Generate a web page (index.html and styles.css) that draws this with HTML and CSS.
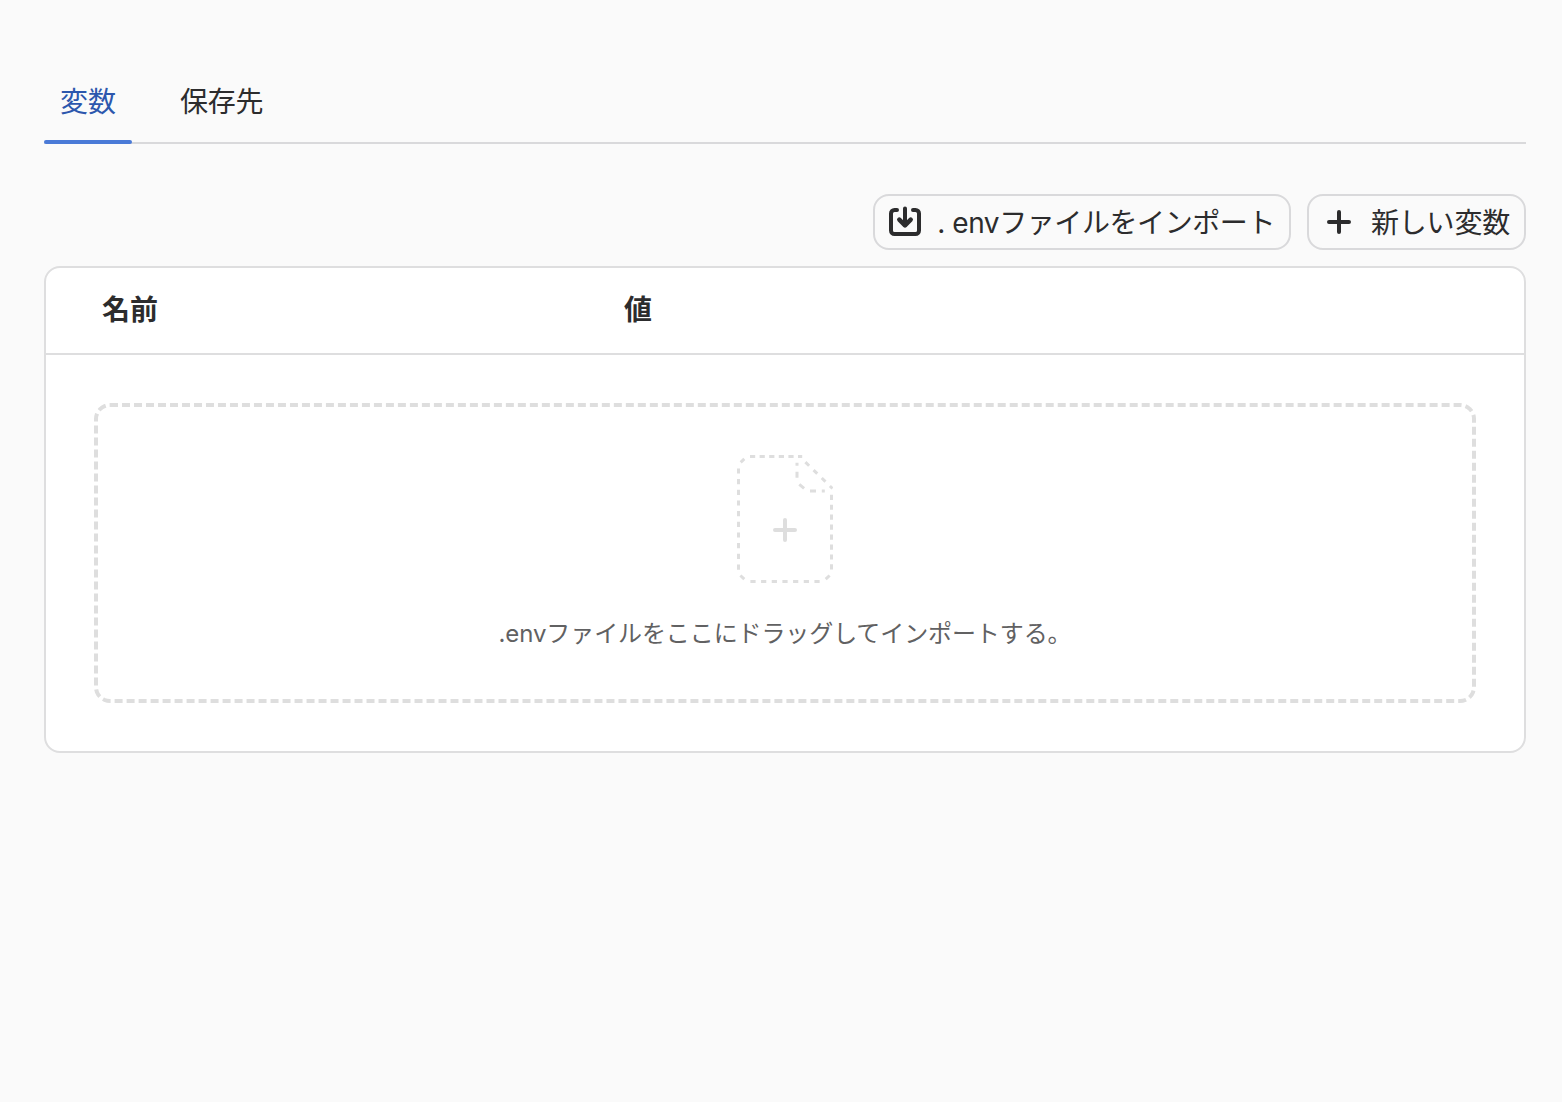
FILE: index.html
```html
<!DOCTYPE html>
<html lang="ja">
<head>
    <meta charset="UTF-8" />
    <title>変数</title>
    <link rel="stylesheet" href="styles.css">
</head>
<body>
    <div class="container">
        <nav class="tabs">
            <a class="tab active">変数</a>
            <a class="tab">保存先</a>
        </nav>

        <div class="toolbar">
            <button type="button" class="btn">
                <svg class="icon" viewBox="0 0 32 32">
                    <path d="M8 4H5.5A3.5 3.5 0 0 0 2 7.5v17A3.5 3.5 0 0 0 5.5 28h21a3.5 3.5 0 0 0 3.5-3.5v-17A3.5 3.5 0 0 0 26.5 4H24M16 2.5V19" />
                    <path class="arrow" d="M10.3 13.7L16 19.4l5.7-5.7" />
                </svg>
                <span class="import-label">. envファイルをインポート</span>
            </button>
            <button type="button" class="btn">
                <svg class="icon" viewBox="0 0 32 32">
                    <path d="M16 6v20M6 16h20" />
                </svg>
                <span>新しい変数</span>
            </button>
        </div>

        <div class="panel">
            <div class="panel-header">
                <div>名前</div>
                <div>値</div>
            </div>
            <div class="panel-body">
                <div class="dropzone">
                    <svg class="file" viewBox="0 0 96 128">
                        <!-- edges -->
                        <path class="edge" stroke-dasharray="5.2 4.4" d="M13 1.5H65.2" />
                        <path class="edge" stroke-dasharray="5.2 5.47" d="M1.5 13.4V115" />
                        <path class="edge" stroke-dasharray="5.2 5.47" d="M13.4 126.5H83" />
                        <path class="edge" stroke-dasharray="5.2 4.75" d="M94.5 39.7V115" />
                        <!-- corners -->
                        <path class="edge" d="M3.7 7.3l3.6-3.4M3.4 120.5l3.9 3.6M92.6 120.5l-3.9 3.6" />
                        <!-- fold -->
                        <path class="edge" stroke-dasharray="5.2 6.2" d="M68.4 7.1L95.5 33.5" />
                        <path class="edge" d="M60 7.8v3M60 16.7v6M62.3 29.3l4.8 4M73 36h6M84.8 36h3" />
                        <path class="plus" d="M48 65v20M38 75h20" />
                    </svg>
                    <p>.envファイルをここにドラッグしてインポートする。</p>
                </div>
            </div>
        </div>
    </div>
</body>
</html>
```

FILE: styles.css
```css
body {
    font-family: Inter, "Noto Sans CJK JP", sans-serif;
    font-size: 28px;
    line-height: 40px;
    color: #2c2c2d;
    background-color: #fafafa;
    margin: 0;
    padding: 64px 36px 0 44px;
}

.tabs {
    display: flex;
    gap: 32px;
    height: 78px;
    border-bottom: 2px solid #d9d9db;
}

.tab {
    box-sizing: border-box;
    height: 80px;
    padding: 18px 16px 0;
    letter-spacing: -0.3px;
}

.tab.active {
    position: relative;
    color: #2c57ad;
    letter-spacing: 0;
}

.tab.active::after {
    content: "";
    position: absolute;
    left: 0;
    right: 0;
    bottom: 0;
    height: 4px;
    border-radius: 2px;
    background-color: #4a7ad7;
}

.toolbar {
    display: flex;
    justify-content: flex-end;
    gap: 16px;
    margin: 50px 0 16px;
}

.btn {
    display: flex;
    align-items: center;
    gap: 16px;
    box-sizing: border-box;
    height: 56px;
    padding: 0 14px;
    border: 2px solid #d9d9db;
    border-radius: 16px;
    background-color: #fafafa;
    color: #2c2c2d;
    font: inherit;
    letter-spacing: -0.2px;
    white-space: nowrap;
}

.btn span {
    padding-top: 2px;
}

.btn .import-label {
    letter-spacing: -0.42px;
}

.icon {
    width: 32px;
    height: 32px;
    fill: none;
    stroke: #2c2c2d;
    stroke-width: 4;
    stroke-linecap: round;
    stroke-linejoin: round;
}

.arrow {
    stroke-width: 4.5;
}

.panel {
    border: 2px solid #dededf;
    border-radius: 16px;
    background-color: #fff;
}

.panel-header {
    display: grid;
    grid-template-columns: 522px 1fr;
    box-sizing: border-box;
    height: 87px;
    padding: 22px 56px 0;
    border-bottom: 2px solid #dededf;
    font-weight: bold;
}

.panel-body {
    padding: 48px;
}

.dropzone {
    display: flex;
    flex-direction: column;
    align-items: center;
    box-sizing: border-box;
    height: 300px;
    padding-top: 48px;
    border: 4px dashed #dedede;
    border-radius: 16px;
}

.dropzone p {
    margin: 31px 0 0;
    font-size: 24px;
    color: #616162;
    letter-spacing: -0.1px;
}

.file {
    width: 96px;
    height: 128px;
    fill: none;
    stroke: #dedede;
}

.edge {
    stroke-width: 3;
}

.plus {
    stroke-width: 4;
    stroke-linecap: round;
}
```
